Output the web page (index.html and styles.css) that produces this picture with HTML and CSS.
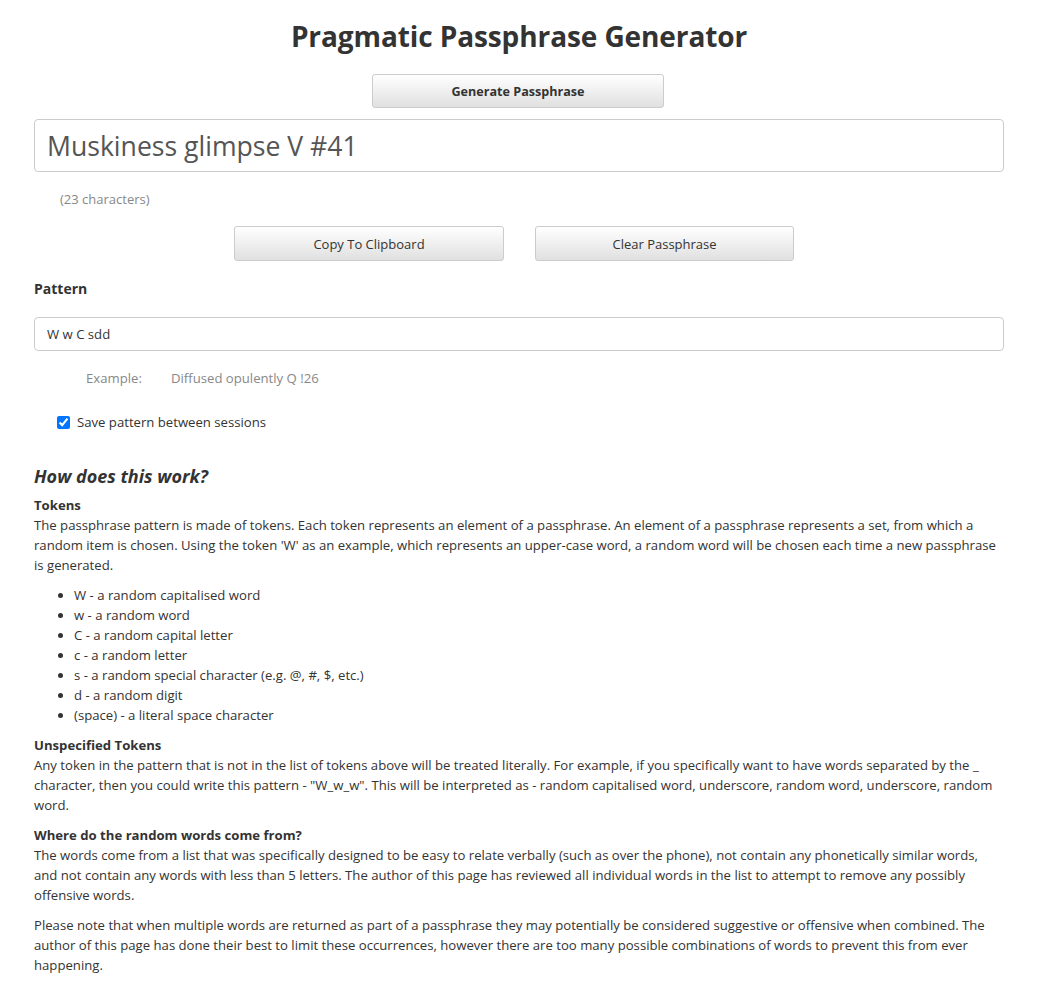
FILE: index.html
```html
<!DOCTYPE html>
<html>
<head>
<meta charset="utf-8">
<title>Pragmatic Passphrase Generator</title>
<link rel="stylesheet" href="styles.css">
</head>
<body>
<div class="container">
  <h1 class="title">Pragmatic Passphrase Generator</h1>
  <div class="center">
    <button class="btn btn-generate">Generate Passphrase</button>
  </div>
  <input class="passphrase" type="text" value="Muskiness glimpse V #41">
  <div class="charcount">(23 characters)</div>
  <div class="actions">
    <button class="btn btn-copy">Copy To Clipboard</button>
    <button class="btn btn-clear">Clear Passphrase</button>
  </div>
  <div class="label">Pattern</div>
  <input class="pattern" type="text" value="W w C sdd">
  <div class="example"><span class="example-label">Example:</span><span>Diffused opulently Q !26</span></div>
  <label class="save"><input type="checkbox" checked class="check"> Save pattern between sessions</label>

  <h2 class="how">How does this work?</h2>
  <div class="section">
    <div class="section-title">Tokens</div>
    <p>The passphrase pattern is made of tokens. Each token represents an element of a passphrase. An element of a passphrase represents a set, from which a random item is chosen. Using the token 'W' as an example, which represents an upper-case word, a random word will be chosen each time a new passphrase is generated.</p>
    <ul class="tokens">
      <li>W - a random capitalised word</li>
      <li>w - a random word</li>
      <li>C - a random capital letter</li>
      <li>c - a random letter</li>
      <li>s - a random special character (e.g. @, #, $, etc.)</li>
      <li>d - a random digit</li>
      <li>(space) - a literal space character</li>
    </ul>
  </div>
  <div class="section">
    <div class="section-title">Unspecified Tokens</div>
    <p>Any token in the pattern that is not in the list of tokens above will be treated literally. For example, if you specifically want to have words separated by the _ character, then you could write this pattern - "W_w_w". This will be interpreted as - random capitalised word, underscore, random word, underscore, random word.</p>
  </div>
  <div class="section">
    <div class="section-title">Where do the random words come from?</div>
    <p>The words come from a list that was specifically designed to be easy to relate verbally (such as over the phone), not contain any phonetically similar words, and not contain any words with less than 5 letters. The author of this page has reviewed all individual words in the list to attempt to remove any possibly offensive words.</p>
    <p>Please note that when multiple words are returned as part of a passphrase they may potentially be considered suggestive or offensive when combined. The author of this page has done their best to limit these occurrences, however there are too many possible combinations of words to prevent this from ever happening.</p>
  </div>
</div>
</body>
</html>
```
FILE: styles.css
```css
html, body {
  margin: 0;
  padding: 0;
  background: #fff;
}
body {
  font-family: "Open Sans", "Noto Sans", sans-serif;
  font-size: 13.15px;
  line-height: 20px;
  color: #333;
}
.container {
  width: 970px;
  margin: 0 0 0 34px;
  padding-top: 16px;
  padding-bottom: 20px;
}
.title {
  margin: 0;
  text-align: center;
  font-size: 28px;
  line-height: 40px;
  font-weight: 700;
  color: #333;
  letter-spacing: -0.1px;
}
.center {
  display: flex;
  justify-content: center;
  margin-top: 18px;
}
.btn {
  font-family: inherit;
  font-size: 13px;
  color: #333;
  background: linear-gradient(to bottom, #ffffff 0%, #e0e0e0 100%);
  border: 1px solid #ccc;
  border-radius: 3px;
  padding: 0;
  cursor: pointer;
}
.btn-generate {
  width: 292px;
  height: 34px;
  font-weight: 700;
  font-size: 12.6px;
  margin-left: -2px;
}
.passphrase {
  display: block;
  box-sizing: border-box;
  width: 970px;
  height: 53px;
  margin-top: 11px;
  padding: 0 12px;
  font-family: inherit;
  font-size: 26.6px;
  color: #555;
  border: 1px solid #ccc;
  border-radius: 4px;
  outline: none;
}
.charcount {
  margin-top: 17px;
  padding-left: 26px;
  color: #888;
  font-size: 13px;
}
.actions {
  display: flex;
  gap: 31px;
  margin-top: 17px;
  padding-left: 200px;
}
.btn-copy {
  width: 270px;
  height: 35px;
}
.btn-clear {
  width: 259px;
  height: 35px;
}
.label {
  margin-top: 18px;
  font-weight: 700;
  font-size: 14px;
}
.pattern {
  display: block;
  box-sizing: border-box;
  width: 970px;
  height: 34px;
  margin-top: 18px;
  padding: 0 12px;
  font-family: inherit;
  font-size: 13.15px;
  color: #333;
  border: 1px solid #ccc;
  border-radius: 4px;
  outline: none;
}
.example {
  margin-top: 17px;
  padding-left: 52px;
  color: #888;
  display: flex;
}
.example-label {
  width: 85px;
}
.save {
  display: flex;
  align-items: center;
  margin-top: 24px;
  padding-left: 23px;
  color: #333;
}
.check {
  width: 13px;
  height: 13px;
  margin: 0 7px 0 0;
  accent-color: #0075ff;
}
.how {
  margin: 31px 0 0;
  font-size: 18px;
  line-height: 26px;
  font-weight: 700;
  font-style: italic;
}
.section {
  margin-top: 6px;
}
.section + .section {
  margin-top: 10px;
}
.section-title {
  font-weight: 700;
}
p {
  margin: 0 0 10px;
}
.tokens {
  margin: 0 0 10px;
  padding-left: 40px;
}
```
